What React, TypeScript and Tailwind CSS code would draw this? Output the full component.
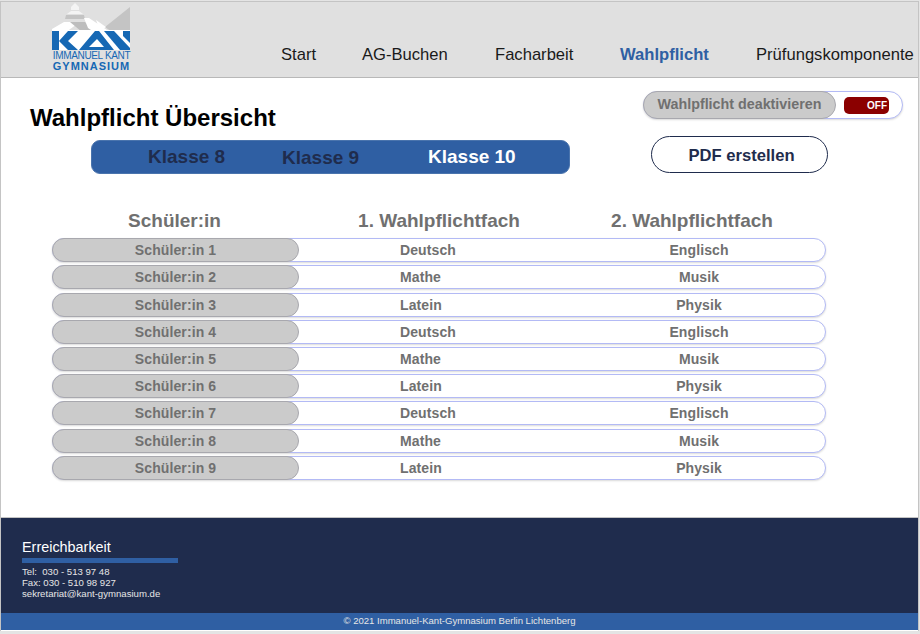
const rows = [
  { name: "Schüler:in 1", first: "Deutsch", second: "Englisch" },
  { name: "Schüler:in 2", first: "Mathe", second: "Musik" },
  { name: "Schüler:in 3", first: "Latein", second: "Physik" },
  { name: "Schüler:in 4", first: "Deutsch", second: "Englisch" },
  { name: "Schüler:in 5", first: "Mathe", second: "Musik" },
  { name: "Schüler:in 6", first: "Latein", second: "Physik" },
  { name: "Schüler:in 7", first: "Deutsch", second: "Englisch" },
  { name: "Schüler:in 8", first: "Mathe", second: "Musik" },
  { name: "Schüler:in 9", first: "Latein", second: "Physik" },
];

const navItems = [
  { label: "Start", width: "w-[81px]" },
  { label: "AG-Buchen", width: "w-[133px]" },
  { label: "Facharbeit", width: "w-[125px]" },
  { label: "Wahlpflicht", width: "w-[136px]", active: true },
  { label: "Prüfungskomponente", width: "w-[161px]" },
];

const Logo = () => (
  <div className="flex w-[79px] flex-col items-center">
    <svg width="79" height="48" viewBox="0 0 79 48" className="block">
      {/* tower and roof */}
      <path d="M19 8 L19 5 L23 1 L27 5 L27 8 Z" fill="#f4f4f4" />
      <path d="M15 12 L19 9 L27 9 L31 12 Z" fill="#f4f4f4" />
      <path d="M14 13 L32 13 L33 17 L13 17 Z" fill="#c4c4c4" />
      <path d="M12 20 L18 20 L28 20 L14 30 L0 30 L0 27 Z" fill="#ffffff" />
      <path d="M18 20 L33 20 L46 30 L30 30 Z" fill="#bdbdbd" />
      <path d="M78 5 L78 30 L60 30 L53 25 Z" fill="#c4c4c4" />
      <path d="M32 16 L37 16 L58 30 L42 30 L36 26 Z" fill="#ffffff" />
      <path d="M44 18 L54 25 L48 29 Z" fill="#ffffff" />
      {/* KANT band */}
      <rect x="0" y="28" width="78" height="20" fill="#ffffff" />
      <path d="M0 29 H7 V48 H0 Z" fill="#1668b4" />
      <path d="M7 39 L16 29 H26 L16 39 L26 48 H16 Z" fill="#1668b4" />
      <path
        fillRule="evenodd"
        d="M27 48 L43 29 H47 L62 48 Z M37 45 H52 L45 37 Z"
        fill="#1668b4"
      />
      <path d="M52 29 H62 L78 46 V48 H68 Z" fill="#1668b4" />
      <path d="M71 29 H78 V41 L71 34 Z" fill="#1668b4" />
    </svg>
    <span className="whitespace-nowrap text-[10px] leading-[11px] tracking-[-0.35px] text-[#1668b4]">
      IMMANUEL KANT
    </span>
    <span className="whitespace-nowrap text-[11px] font-bold leading-[10px] tracking-[1px] text-[#1668b4]">
      GYMNASIUM
    </span>
  </div>
);

export default function App() {
  return (
    <div className="h-[634px] w-[920px] overflow-hidden bg-[#e4e4e4] font-['Liberation_Sans',Arial,sans-serif]">
      <div className="mt-[1px] flex h-[630px] w-[919px] flex-col border-x border-t border-[#c4c4c4] bg-white">
        {/* Header */}
        <header className="flex h-[76px] shrink-0 border-b border-[#b8b8b8] bg-[#e0e0e0]">
          <div className="ml-[51px] w-[229px] shrink-0">
            <Logo />
          </div>
          <nav className="flex items-start pt-[43px]">
            {navItems.map((item) => (
              <span
                key={item.label}
                className={`${item.width} shrink-0 whitespace-nowrap text-[16.6px] leading-[20px] ${
                  item.active ? "font-bold text-[#2f5fa3]" : "text-[#1a1a1a]"
                }`}
              >
                {item.label}
              </span>
            ))}
          </nav>
        </header>

        {/* Main */}
        <main className="h-[439px] shrink-0 bg-white">
          <div className="flex">
            <div className="w-[640px] shrink-0">
              <h1 className="ml-[29px] mt-[26px] text-2xl font-bold leading-[28px] text-black">
                Wahlpflicht Übersicht
              </h1>
              <div className="ml-[90px] mt-[8px] flex h-[34px] w-[479px] items-center rounded-[9px] border border-[#4a74ad] bg-[#2f5fa3] text-[19px] font-bold leading-[20px]">
                <span className="ml-[56px] w-[134px] text-[#1f2c4d]">Klasse 8</span>
                <span className="mt-[2px] w-[146px] text-[#1f2c4d]">Klasse 9</span>
                <span className="text-white">Klasse 10</span>
              </div>
            </div>
            <div className="shrink-0">
              <div className="ml-[2px] mt-[13px] flex h-[28px] w-[260px] items-center rounded-[14px] border border-[#b3baf5] bg-white shadow-[0_1px_2px_rgba(0,0,0,0.15)]">
                <div className="-ml-px flex h-[28px] w-[193px] items-center justify-center rounded-[14px] border border-[#a8a8ae] bg-[#cbcbcb] text-[14.3px] font-bold text-[#707070]">
                  Wahlpflicht deaktivieren
                </div>
                <div className="ml-[8px] flex h-[17px] w-[45px] items-center justify-end rounded-[5px] bg-[#8b0000] pr-[2px] text-[10px] font-bold text-white">
                  OFF
                </div>
              </div>
              <div className="ml-[10px] mt-[17px] flex h-[37px] w-[177px] items-center justify-center rounded-[19px] border border-[#1f2c4d] bg-white pl-[4px] pt-[3px] text-[16.6px] font-bold text-[#1f2c4d]">
                PDF erstellen
              </div>
            </div>
          </div>

          {/* Table */}
          <div className="ml-[51px] mt-[36px] w-[774px]">
            <div className="flex h-[22px] items-center text-[19px] font-bold text-[#707070]">
              <span className="w-[245px] text-center">Schüler:in</span>
              <span className="w-[284px] text-center">1. Wahlpflichtfach</span>
              <span className="w-[222px] text-center">2. Wahlpflichtfach</span>
            </div>
            <div className="mt-[6.1px] flex flex-col gap-[3.22px]">
              {rows.map((row) => (
                <div
                  key={row.name}
                  className="flex h-[24px] items-center rounded-[12px] border border-[#b3baf5] bg-white text-sm font-bold tracking-[0.1px] text-[#707070] shadow-[0_1px_2px_rgba(0,0,0,0.15)]"
                >
                  <div className="-ml-px flex h-[24px] w-[247px] shrink-0 items-center justify-center rounded-[12px] border border-[#a8a8ae] bg-[#cbcbcb]">
                    {row.name}
                  </div>
                  <span className="w-[258px] shrink-0 pl-[101px]">{row.first}</span>
                  <span className="flex-1 pl-[16px] text-center">{row.second}</span>
                </div>
              ))}
            </div>
          </div>
        </main>

        {/* Footer */}
        <footer className="flex h-[96px] shrink-0 flex-col border-t border-[#c4c4c4] bg-[#1f2c4d] pl-[21px] pt-[21px] text-white">
          <div className="text-[14.4px] leading-[16px]">Erreichbarkeit</div>
          <div className="mt-[3px] h-[5px] w-[156px] bg-[#2f5fa3]" />
          <div className="mt-[3px] text-[9.6px] leading-[11px] text-[#e6e6e6]">
            <div>Tel:&nbsp; 030 - 513 97 48</div>
            <div>Fax: 030 - 510 98 927</div>
            <div>sekretariat@kant-gymnasium.de</div>
          </div>
        </footer>
        <div className="flex h-[17px] shrink-0 items-center justify-center bg-[#2f5fa3] text-[9.55px] text-[#e6e6e6]">
          © 2021 Immanuel-Kant-Gymnasium Berlin Lichtenberg
        </div>
      </div>
    </div>
  );
}
